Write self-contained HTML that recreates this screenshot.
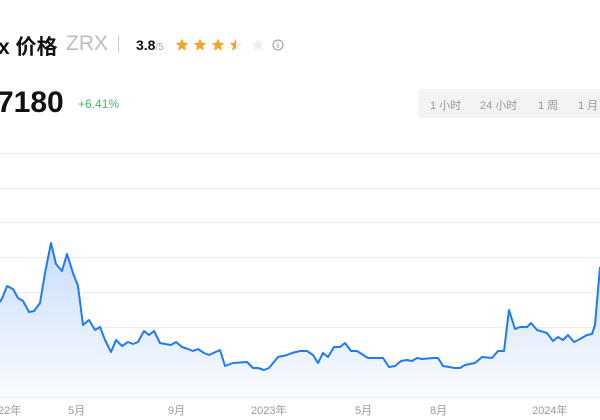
<!DOCTYPE html>
<html><head><meta charset="utf-8"><style>
body{margin:0;width:600px;height:420px;background:#fff;position:relative;overflow:hidden;font-family:"Liberation Sans","Noto Sans CJK SC",sans-serif}
.a{position:absolute;white-space:nowrap}
</style></head><body>
<div class="a" style="left:-2px;top:31px;font-size:21px;font-weight:bold;color:#111">x 价格</div>
<div class="a" style="left:66px;top:32px;font-size:21px;color:#bdbdbd">ZRX</div>
<div class="a" style="left:118px;top:35px;width:1px;height:18px;background:#ccc"></div>
<div class="a" style="left:136px;top:37px;font-size:14px;font-weight:bold;color:#111">3.8<span style="font-size:10px;color:#aaa;font-weight:normal">/5</span></div>
<svg class="a" style="left:170px;top:36px" width="120" height="18" viewBox="0 0 120 18">
<defs><path id="s" d="M0,-6.5 L1.9,-2.2 6.4,-2 2.9,1 4,5.6 0,3.2 -4,5.6 -2.9,1 -6.4,-2 -1.9,-2.2Z"/></defs>
<use href="#s" x="12" y="9" fill="#f7a32a"/>
<use href="#s" x="30" y="9" fill="#f7a32a"/>
<use href="#s" x="48" y="9" fill="#f7a32a"/>
<use href="#s" x="66" y="9" fill="#f0f0f0"/>
<path transform="translate(66,9)" fill="#f7a32a" d="M0,-6.5 L-1.9,-2.2 -6.4,-2 -2.9,1 -4,5.6 0,3.2Z"/>
<use href="#s" x="88" y="9" fill="#eee"/>
<circle cx="108" cy="9" r="5" fill="none" stroke="#999" stroke-width="1"/>
<rect x="107.5" y="8" width="1" height="4" fill="#999"/><rect x="107.5" y="5.8" width="1" height="1.2" fill="#999"/>
</svg>
<div class="a" style="left:-3px;top:86px;font-size:30px;font-weight:bold;color:#111">7180</div>
<div class="a" style="left:78px;top:97px;font-size:12px;color:#3cb96a">+6.41%</div>
<div class="a" style="left:418px;top:89px;width:190px;height:29px;background:#f3f3f3;border-radius:3px"></div>
<div class="a" style="left:430px;top:97px;font-size:11px;color:#999">1 小时</div>
<div class="a" style="left:480px;top:97px;font-size:11px;color:#999">24 小时</div>
<div class="a" style="left:538px;top:97px;font-size:11px;color:#999">1 周</div>
<div class="a" style="left:578px;top:97px;font-size:11px;color:#999">1 月</div>
<svg class="a" style="left:0;top:0" width="600" height="420">
<defs><linearGradient id="g" x1="0" y1="0" x2="0" y2="1"><stop offset="0" stop-color="#c9dcfb"/><stop offset="1" stop-color="#fafcff"/></linearGradient></defs>
<g stroke="#ececec" stroke-width="1">
<line x1="0" y1="153.5" x2="600" y2="153.5"/><line x1="0" y1="188.5" x2="600" y2="188.5"/><line x1="0" y1="222.5" x2="600" y2="222.5"/><line x1="0" y1="257.5" x2="600" y2="257.5"/><line x1="0" y1="292.5" x2="600" y2="292.5"/><line x1="0" y1="327.5" x2="600" y2="327.5"/><line x1="0" y1="362.5" x2="600" y2="362.5"/><line x1="0" y1="397.5" x2="600" y2="397.5"/>
</g>
<path fill="url(#g)" d="M0,302 L2.7,297 7,286 13,289 18,298 23,301 29,312 34,311 40,303 45,273 51,243 56,264 62,271 67,254 73,273 78,286 83,325 89,320 95,330 100,327 105,340 111,352 116,340 122,346 128,342 133,344 138,342 144,331 149,335 154,331 160,343 165,344 171,345 176,342 182,347 188,349 193,351 198,349 204,353 209,355 220,350 225,366 233,363 247,362 253,368 258,368 264,370 269,368 278,357 287,355 292,353 300,351 307,351 313,355 318,363 323,353 328,357 334,347 340,347 345,343 351,351 357,351 368,358 383,358 389,367 395,366 401,361 407,360 412,361 417,358 422,359 433,358 438,358 443,366 455,368 460,368 465,365 475,363 482,357 492,358 498,351 504,351 509,310 515,329 520,327 527,327 531,323 537,330 547,333 553,341 558,337 563,340 568,335 574,342 580,339 587,335 592,334 595,325 600,267 L600,397 L0,397Z"/>
<path fill="none" stroke="#1f7bf4" stroke-width="2" stroke-linejoin="round" d="M0,302 L2.7,297 7,286 13,289 18,298 23,301 29,312 34,311 40,303 45,273 51,243 56,264 62,271 67,254 73,273 78,286 83,325 89,320 95,330 100,327 105,340 111,352 116,340 122,346 128,342 133,344 138,342 144,331 149,335 154,331 160,343 165,344 171,345 176,342 182,347 188,349 193,351 198,349 204,353 209,355 220,350 225,366 233,363 247,362 253,368 258,368 264,370 269,368 278,357 287,355 292,353 300,351 307,351 313,355 318,363 323,353 328,357 334,347 340,347 345,343 351,351 357,351 368,358 383,358 389,367 395,366 401,361 407,360 412,361 417,358 422,359 433,358 438,358 443,366 455,368 460,368 465,365 475,363 482,357 492,358 498,351 504,351 509,310 515,329 520,327 527,327 531,323 537,330 547,333 553,341 558,337 563,340 568,335 574,342 580,339 587,335 592,334 595,325 600,267"/>
<g font-size="11" fill="#999" font-family="Liberation Sans,Noto Sans CJK SC,sans-serif">
<text x="-2" y="414">22年</text><text x="68" y="414">5月</text><text x="168" y="414">9月</text><text x="251" y="414">2023年</text><text x="355" y="414">5月</text><text x="430" y="414">8月</text><text x="532" y="414">2024年</text>
</g>
</svg>
</body></html>
